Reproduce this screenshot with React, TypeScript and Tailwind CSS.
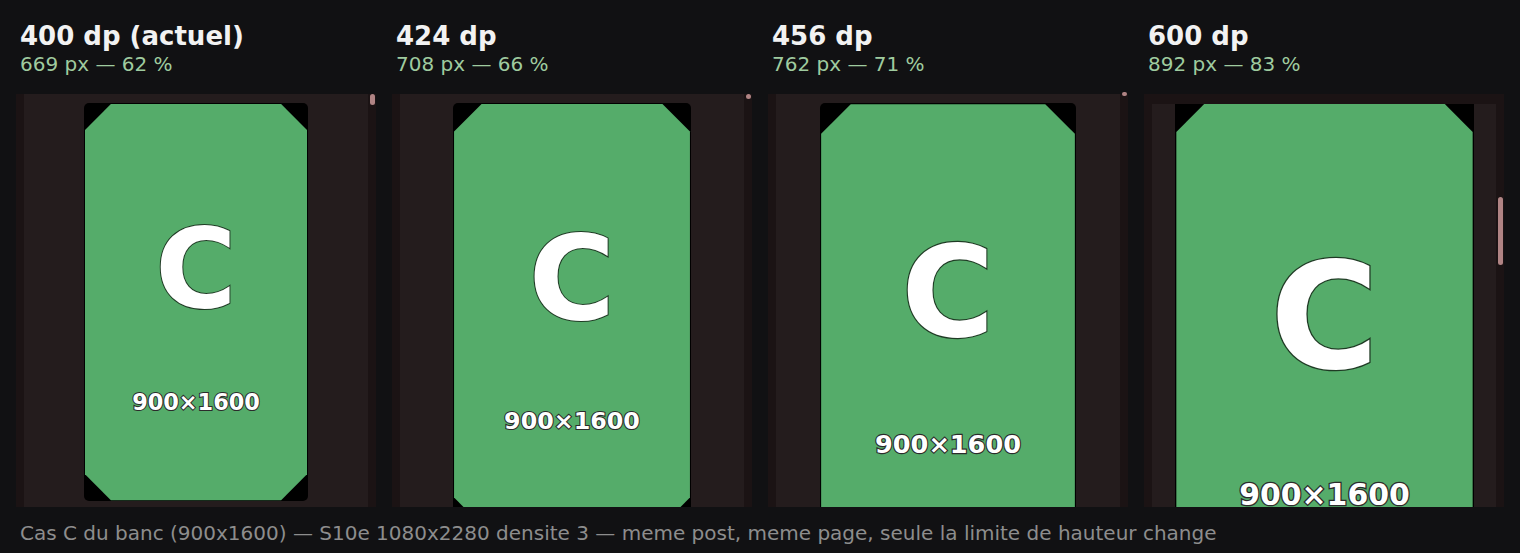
type Col = {
  title: string;
  sub: string;
  cardW: number;
  thumbTop: number;
  thumbH: number;
  padded?: boolean;
};

const cols: Col[] = [
  { title: "400 dp (actuel)", sub: "669 px — 62 %", cardW: 224, thumbTop: 0, thumbH: 11 },
  { title: "424 dp", sub: "708 px — 66 %", cardW: 238, thumbTop: 0, thumbH: 5 },
  { title: "456 dp", sub: "762 px — 71 %", cardW: 256, thumbTop: -2, thumbH: 4 },
  { title: "600 dp", sub: "892 px — 83 %", cardW: 299, thumbTop: 103, thumbH: 68, padded: true },
];

function Card({ w }: { w: number }) {
  return (
    <div
      className="shrink-0 rounded-[5px] overflow-hidden"
      style={{ width: w, height: (w * 16) / 9 }}
    >
      <svg viewBox="0 0 900 1600" width="100%" height="100%" preserveAspectRatio="none">
        <rect x="0" y="0" width="900" height="1600" fill="#000" />
        <polygon
          points="108,4 792,4 896,108 896,1492 792,1596 108,1596 4,1492 4,108"
          fill="#55ac6a"
        />
        <text
          x="450"
          y="818"
          textAnchor="middle"
          fontFamily="DejaVu Sans, sans-serif"
          fontWeight="bold"
          fontSize="445"
          fill="#fff"
          stroke="#1f3a24"
          strokeWidth="8"
          paintOrder="stroke"
        >
          C
        </text>
        <text
          x="450"
          y="1232"
          textAnchor="middle"
          fontFamily="DejaVu Sans, sans-serif"
          fontWeight="bold"
          fontSize="90"
          fill="#fff"
          stroke="#2b2b2b"
          strokeWidth="8"
          paintOrder="stroke"
        >
          900×1600
        </text>
      </svg>
    </div>
  );
}

function Column({ c }: { c: Col }) {
  return (
    <div className="w-[360px] shrink-0 flex flex-col">
      <div className="pl-1">
        <div className="text-[26px] leading-[30px] font-bold text-[#f2f2f2]">{c.title}</div>
        <div className="mt-[1px] text-[20px] leading-[24px] text-[#9fcb9f]">{c.sub}</div>
      </div>
      <div
        className={
          "mt-[18px] h-[413px] bg-[#1b1314] px-2 relative flex " + (c.padded ? "pt-[10px]" : "")
        }
      >
        <div
          className={
            "flex-1 bg-[#241c1d] overflow-hidden flex justify-center items-start " +
            (c.padded ? "" : "pt-[9px]")
          }
        >
          <div className={c.padded ? "-mt-[8px]" : ""}>
            <Card w={c.cardW} />
          </div>
        </div>
        <div
          className="absolute right-[1px] w-[5px] rounded-full bg-[#b08484]"
          style={{ top: c.thumbTop, height: c.thumbH }}
        />
      </div>
    </div>
  );
}

export default function App() {
  return (
    <div className="w-[1520px] h-[553px] bg-[#111113] px-4 pt-[21px] font-['DejaVu_Sans',sans-serif] overflow-hidden">
      <div className="flex gap-4">
        {cols.map((c) => (
          <Column key={c.title} c={c} />
        ))}
      </div>
      <div className="mt-[13px] pl-1 text-[20px] leading-[26px] text-[#8d8d8d]">
        Cas C du banc (900x1600) — S10e 1080x2280 densite 3 — meme post, meme page, seule la limite de hauteur change
      </div>
    </div>
  );
}
